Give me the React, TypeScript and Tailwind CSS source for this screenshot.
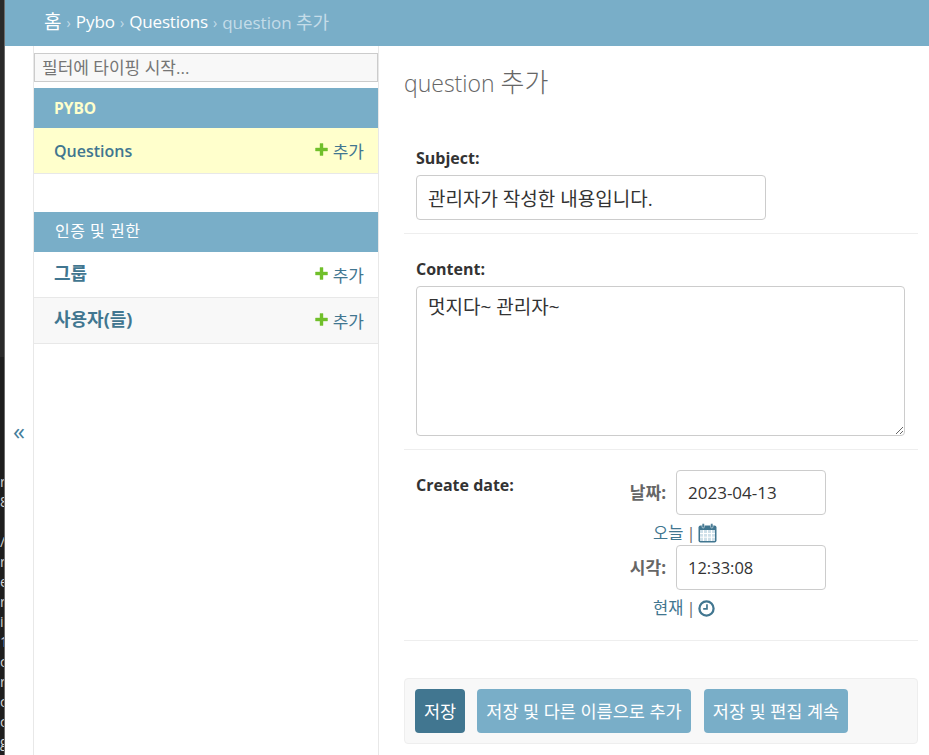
import { CSSProperties } from "react";

const font: CSSProperties = {
  fontFamily: '"Open Sans", "Noto Sans CJK KR", sans-serif',
};

const PlusIcon = () => (
  <svg width="13" height="13" viewBox="0 0 13 13" className="mt-[-3px] shrink-0">
    <path d="M5 0.5h3v4.5h4.5v3H8v4.5H5V8H0.5V5H5z" fill="#70bf2b" stroke="#70bf2b" strokeWidth="0.4" strokeLinejoin="round" />
  </svg>
);

const AddLink = () => (
  <span className="flex items-center gap-[5px] text-[17px] text-[#417690]">
    <PlusIcon />
    <span className="mt-[3px]">추가</span>
  </span>
);

const CalendarIcon = () => (
  <svg width="19" height="20" viewBox="0 0 19 20" className="inline-block">
    <rect x="0.5" y="2.5" width="18" height="17" rx="2" fill="#417690" />
    <rect x="2" y="7" width="15" height="11" fill="#cfe0e9" />
    <path d="M5.5 7v11M9.5 7v11M13.5 7v11M2 10.5h15M2 14.2h15" stroke="#fff" strokeWidth="1" />
    <rect x="4" y="0.5" width="2.4" height="4.5" rx="1.2" fill="#417690" stroke="#fff" strokeWidth="0.5" />
    <rect x="12.6" y="0.5" width="2.4" height="4.5" rx="1.2" fill="#417690" stroke="#fff" strokeWidth="0.5" />
  </svg>
);

const ClockIcon = () => (
  <svg width="17" height="17" viewBox="0 0 18 18" className="inline-block">
    <circle cx="9" cy="9" r="7.5" fill="#fff" stroke="#417690" strokeWidth="2.4" />
    <path d="M9.5 4.5v5H5.5" fill="none" stroke="#417690" strokeWidth="1.8" />
  </svg>
);

// bits of the editor window showing behind the browser
const stripChars = ["r", "8", "", "/", "r", "e", "r", "i", "1", "c", "r", "c", "c", "g"];

const ModelRow = ({ name, bold, bg }: { name: string; bold?: boolean; bg: string }) => (
  <div className={`flex h-[46px] items-center justify-between border-b border-[#e8e8e8] pl-5 pr-[14px] ${bg}`}>
    <span className={`text-[#417690] ${bold ? "mt-[-2px] text-[18px] font-bold" : "mt-[1px] text-[16px] font-semibold"}`}>{name}</span>
    <AddLink />
  </div>
);

export default function App() {
  return (
    <div className="flex h-[755px] w-[929px] overflow-hidden bg-white text-[#333]" style={font}>
      <div className="flex w-[5px] shrink-0 flex-col border-r border-[#6b6b6b] bg-[#1e1e1e]">
        <div className="h-[357px] bg-[#2a2a2a]" />
        <div className="mt-[115px] flex flex-col overflow-hidden text-[14px] leading-[20px] text-[#d4d4d4]">
          {stripChars.map((c, i) => (
            <span key={i} className="h-[20px]">
              {c}
            </span>
          ))}
        </div>
      </div>

      <div className="flex min-w-0 flex-1 flex-col">
        <header className="flex h-[46px] shrink-0 items-center bg-[#79aec8] pb-[2px] pl-[39px] text-[17px] text-white">
          <span className="text-[19px]">홈</span>
          <span className="mx-[5px] text-[14px] text-[#c4dce8]">›</span>
          <span>Pybo</span>
          <span className="mx-[5px] text-[14px] text-[#c4dce8]">›</span>
          <span className="tracking-[-0.2px]">Questions</span>
          <span className="mx-[5px] text-[14px] text-[#c4dce8]">›</span>
          <span className="text-[#c4dce8]">
            question <span className="text-[18px]">추가</span>
          </span>
        </header>

        <div className="flex min-h-0 flex-1">
          <div className="flex w-[28px] shrink-0 items-center justify-center">
            <span className="mt-[61px] text-[24px] text-[#447e9b]">«</span>
          </div>

          <nav className="w-[346px] shrink-0 border-x border-[#e8e8e8] pt-[7px]">
            <input
              readOnly
              placeholder="필터에 타이핑 시작..."
              className="mb-[6px] block h-[29px] w-full border border-[#cccccc] bg-[#f8f8f8] px-[7px] text-[17px] text-[#666] placeholder:text-[#757575]"
            />
            <div className="flex h-[40px] items-center bg-[#79aec8] pt-[2px] pl-5 text-[15.5px] font-bold text-[#ffffcc]">PYBO</div>
            <ModelRow name="Questions" bg="bg-[#ffffcc]" />
            <div className="mt-[38px] flex h-[40px] items-center bg-[#79aec8] pb-[2px] pl-[21px] text-[16px] tracking-[0.5px] text-white">
              인증 및 권한
            </div>
            <ModelRow name="그룹" bold bg="bg-white" />
            <ModelRow name="사용자(들)" bold bg="bg-[#f8f8f8]" />
          </nav>

          <main className="min-w-0 flex-1 pl-[25px] pr-[11px]">
            <h1 className="mt-[19px] text-[23px] leading-[34px] font-light text-[#666]">
              question <span className="text-[26px]">추가</span>
            </h1>

            <div className="mt-[46px] border-b border-[#eeeeee] px-3 pb-[13px]">
              <label className="block text-[16px] leading-[24px] font-bold text-[#333]">Subject:</label>
              <input
                readOnly
                defaultValue="관리자가 작성한 내용입니다."
                className="mt-[5px] block h-[45px] w-[350px] rounded border border-[#cccccc] px-[11px] text-[19px] text-[#333]"
              />
            </div>

            <div className="border-b border-[#eeeeee] px-3 pt-[23px] pb-[13px]">
              <label className="block text-[16px] leading-[24px] font-bold text-[#333]">Content:</label>
              <textarea
                readOnly
                defaultValue="멋지다~ 관리자~"
                className="mt-[5px] block h-[150px] w-[489px] rounded border border-[#cccccc] px-[11px] py-[8px] text-[19px] leading-[24px] text-[#333]"
              />
            </div>

            <div className="flex border-b border-[#eeeeee] px-3 pt-[20px] pb-[14px]">
              <label className="w-[202px] text-[16px] leading-[30px] font-bold text-[#333]">Create date:</label>
              <div className="flex flex-col">
                <div className="flex items-center">
                  <span className="w-[48px] text-right text-[17px] font-bold text-[#666]">날짜:</span>
                  <input
                    readOnly
                    defaultValue="2023-04-13"
                    className="ml-[10px] block h-[45px] w-[150px] rounded border border-[#cccccc] px-[11px] text-[17px] text-[#333]"
                  />
                </div>
                <div className="flex h-[30px] items-center pt-[6px] pl-[35px] text-[16.5px] text-[#417690]">
                  오늘 <span className="mx-[3px] text-[#666]">|</span>
                  <CalendarIcon />
                </div>
                <div className="flex items-center">
                  <span className="w-[48px] text-right text-[17px] font-bold text-[#666]">시각:</span>
                  <input
                    readOnly
                    defaultValue="12:33:08"
                    className="ml-[10px] block h-[45px] w-[150px] rounded border border-[#cccccc] px-[11px] text-[16.5px] text-[#333]"
                  />
                </div>
                <div className="flex h-[36px] items-center pl-[35px] text-[16.5px] text-[#417690]">
                  현재 <span className="mx-[3px] text-[#666]">|</span>
                  <ClockIcon />
                </div>
              </div>
            </div>

            <div className="mt-[37px] flex h-[66px] items-center rounded border border-[#eeeeee] bg-[#f8f8f8] px-[10px]">
              <button className="h-[44px] w-[50px] rounded bg-[#417690] text-[17.5px] text-white">저장</button>
              <button className="ml-3 h-[44px] w-[214px] rounded bg-[#79aec8] text-[17.5px] text-white">저장 및 다른 이름으로 추가</button>
              <button className="ml-[13px] h-[44px] w-[144px] rounded bg-[#79aec8] text-[17.5px] text-white">저장 및 편집 계속</button>
            </div>
          </main>
        </div>
      </div>
    </div>
  );
}
